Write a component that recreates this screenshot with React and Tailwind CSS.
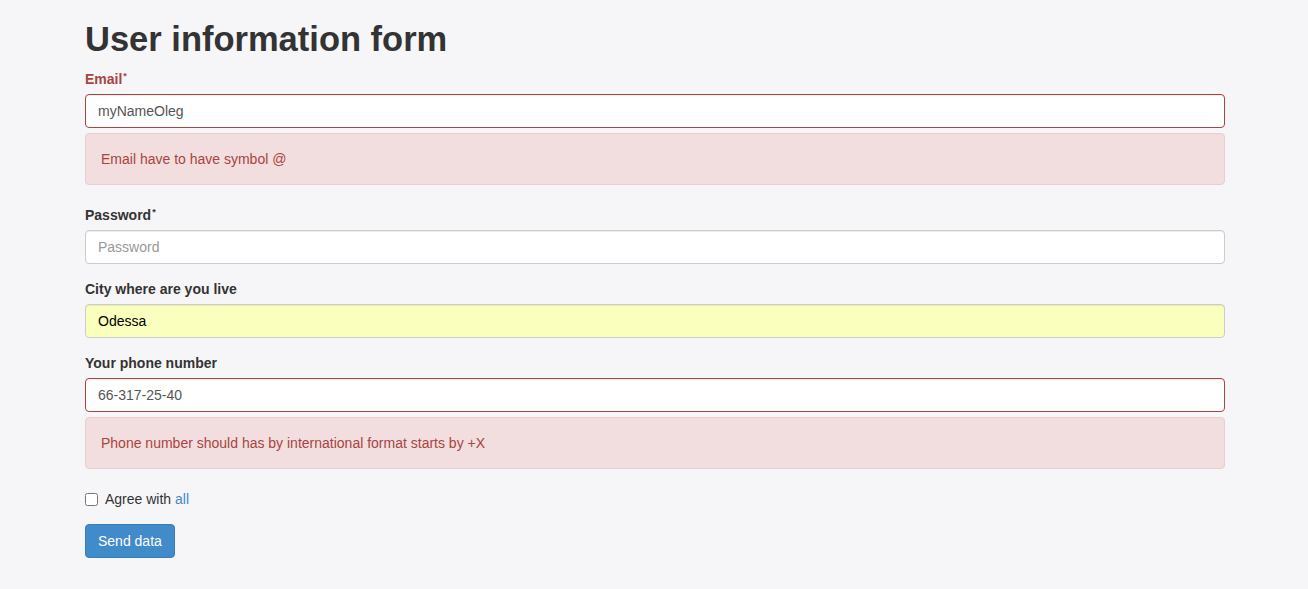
import React, { useState } from 'react';

const labelCls = "block font-bold mb-[5px] leading-[20px]";
const inputBase =
  "block w-full h-[34px] px-3 py-[6px] text-[14px] leading-[20px] rounded-[4px] border outline-none shadow-[inset_0_1px_1px_rgba(0,0,0,0.075)]";

const Req = () => <sup className="text-[9px] relative -top-[5px] ml-[1px]">*</sup>;

const Alert = ({ children }) => (
  <div className="mt-[5px] mb-5 p-[15px] rounded-[4px] border border-[#ebccd1] bg-[#f2dede] text-[#a94442]">
    {children}
  </div>
);

export default function App() {
  const [email, setEmail] = useState('myNameOleg');
  const [password, setPassword] = useState('');
  const [city, setCity] = useState('Odessa');
  const [phone, setPhone] = useState('66-317-25-40');
  const [agree, setAgree] = useState(false);

  return (
    <div className="min-h-screen bg-[#f6f6f8] pt-[19px] font-['Liberation_Sans',Arial,sans-serif] text-[14px] leading-[20px] text-[#333]">
      <div className="w-[1140px] ml-[85px] pb-8">
        <h1 className="text-[34.5px] leading-[40px] font-bold mb-[10px] text-[#333]">User information form</h1>

        {/* email */}
        <div>
          <label className={`${labelCls} text-[#a94442]`}>Email<Req /></label>
          <input
            className={`${inputBase} border-[#a94442] bg-white text-[#555]`}
            value={email}
            onChange={e => setEmail(e.target.value)}
          />
          <Alert>Email have to have symbol @</Alert>
        </div>

        {/* password */}
        <div className="mb-[15px]">
          <label className={labelCls}>Password<Req /></label>
          <input
            type="password"
            placeholder="Password"
            className={`${inputBase} border-[#ccc] bg-white text-[#555] placeholder:text-[#999]`}
            value={password}
            onChange={e => setPassword(e.target.value)}
          />
        </div>

        {/* city */}
        <div className="mb-[15px]">
          <label className={labelCls}>City where are you live</label>
          <input
            className={`${inputBase} border-[#ccc] bg-[#faffbd] text-black`}
            value={city}
            onChange={e => setCity(e.target.value)}
          />
        </div>

        {/* phone */}
        <div>
          <label className={labelCls}>Your phone number</label>
          <input
            className={`${inputBase} border-[#a94442] bg-white text-[#555]`}
            value={phone}
            onChange={e => setPhone(e.target.value)}
          />
          <Alert>Phone number should has by international format starts by +X</Alert>
        </div>

        <div className="mb-[15px] flex items-center h-5">
          <input
            type="checkbox"
            checked={agree}
            onChange={e => setAgree(e.target.checked)}
            className="w-[13px] h-[13px] m-0"
          />
          <span className="ml-[7px]">
            Agree with <a href="#" className="text-[#428bca]">all</a>
          </span>
        </div>

        <button className="h-[34px] px-3 rounded-[4px] border border-[#357ebd] bg-[#428bca] text-white text-[14px]">
          Send data
        </button>
      </div>
    </div>
  );
}
